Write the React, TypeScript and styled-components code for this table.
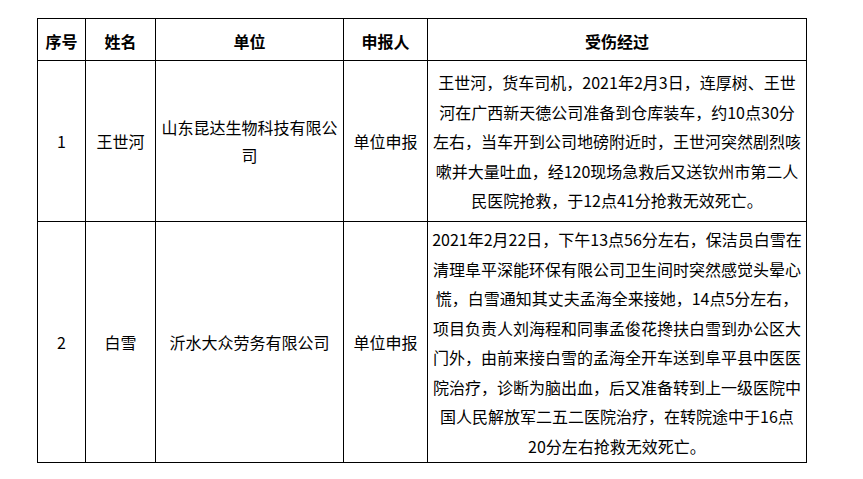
import * as React from 'react';
import styled, { createGlobalStyle } from 'styled-components';

const GlobalStyle = createGlobalStyle`
  html, body {
    margin: 0;
    padding: 0;
    background: #fff;
  }
  body {
    font-family: "Noto Sans CJK SC", "Noto Sans", sans-serif;
    color: #000;
  }
`;

const Page = styled.div`
  width: 863px;
  height: 479px;
  padding: 18px 0 0 37px;
  box-sizing: border-box;
`;

const Table = styled.table`
  width: 769px;
  table-layout: fixed;
  border-collapse: collapse;
  font-size: 16px;
`;

const Col = styled.col<{ $w: number }>`
  width: ${(p) => p.$w}px;
`;

const Row = styled.tr<{ $h: number }>`
  height: ${(p) => p.$h}px;
`;

const Head = styled.th`
  border: 1px solid #000;
  font-weight: bold;
  text-align: center;
  vertical-align: middle;
  padding: 3px 0 0;
  line-height: 20px;
`;

const Cell = styled.td`
  border: 1px solid #000;
  text-align: center;
  vertical-align: middle;
  padding: 0 4px;
  line-height: 28px;
`;

const Story = styled.td`
  border: 1px solid #000;
  text-align: center;
  vertical-align: middle;
  padding: 2px 0 0;
  line-height: 29.5px;
`;

const Line = styled.span`
  display: block;
  white-space: nowrap;
`;

interface Report {
  no: string;
  name: string;
  unit: string[];
  reporter: string;
  story: string[];
  height: number;
}

const reports: Report[] = [
  {
    no: '1',
    name: '王世河',
    unit: ['山东昆达生物科技有限公', '司'],
    reporter: '单位申报',
    story: [
      '王世河，货车司机，2021年2月3日，连厚树、王世',
      '河在广西新天德公司准备到仓库装车，约10点30分',
      '左右，当车开到公司地磅附近时，王世河突然剧烈咳',
      '嗽并大量吐血，经120现场急救后又送钦州市第二人',
      '民医院抢救，于12点41分抢救无效死亡。',
    ],
    height: 161,
  },
  {
    no: '2',
    name: '白雪',
    unit: ['沂水大众劳务有限公司'],
    reporter: '单位申报',
    story: [
      '2021年2月22日，下午13点56分左右，保洁员白雪在',
      '清理阜平深能环保有限公司卫生间时突然感觉头晕心',
      '慌，白雪通知其丈夫孟海全来接她，14点5分左右，',
      '项目负责人刘海程和同事孟俊花搀扶白雪到办公区大',
      '门外，由前来接白雪的孟海全开车送到阜平县中医医',
      '院治疗，诊断为脑出血，后又准备转到上一级医院中',
      '国人民解放军二五二医院治疗，在转院途中于16点',
      '20分左右抢救无效死亡。',
    ],
    height: 241,
  },
];

export default function App() {
  return (
    <Page>
      <GlobalStyle />
      <Table>
        <colgroup>
          <Col $w={48} />
          <Col $w={70} />
          <Col $w={188} />
          <Col $w={84} />
          <Col $w={379} />
        </colgroup>
        <thead>
          <Row $h={42}>
            <Head>序号</Head>
            <Head>姓名</Head>
            <Head>单位</Head>
            <Head>申报人</Head>
            <Head>受伤经过</Head>
          </Row>
        </thead>
        <tbody>
          {reports.map((r) => (
            <Row key={r.no} $h={r.height}>
              <Cell>{r.no}</Cell>
              <Cell>{r.name}</Cell>
              <Cell>
                {r.unit.map((u) => (
                  <Line key={u}>{u}</Line>
                ))}
              </Cell>
              <Cell>{r.reporter}</Cell>
              <Story>
                {r.story.map((s) => (
                  <Line key={s}>{s}</Line>
                ))}
              </Story>
            </Row>
          ))}
        </tbody>
      </Table>
    </Page>
  );
}
